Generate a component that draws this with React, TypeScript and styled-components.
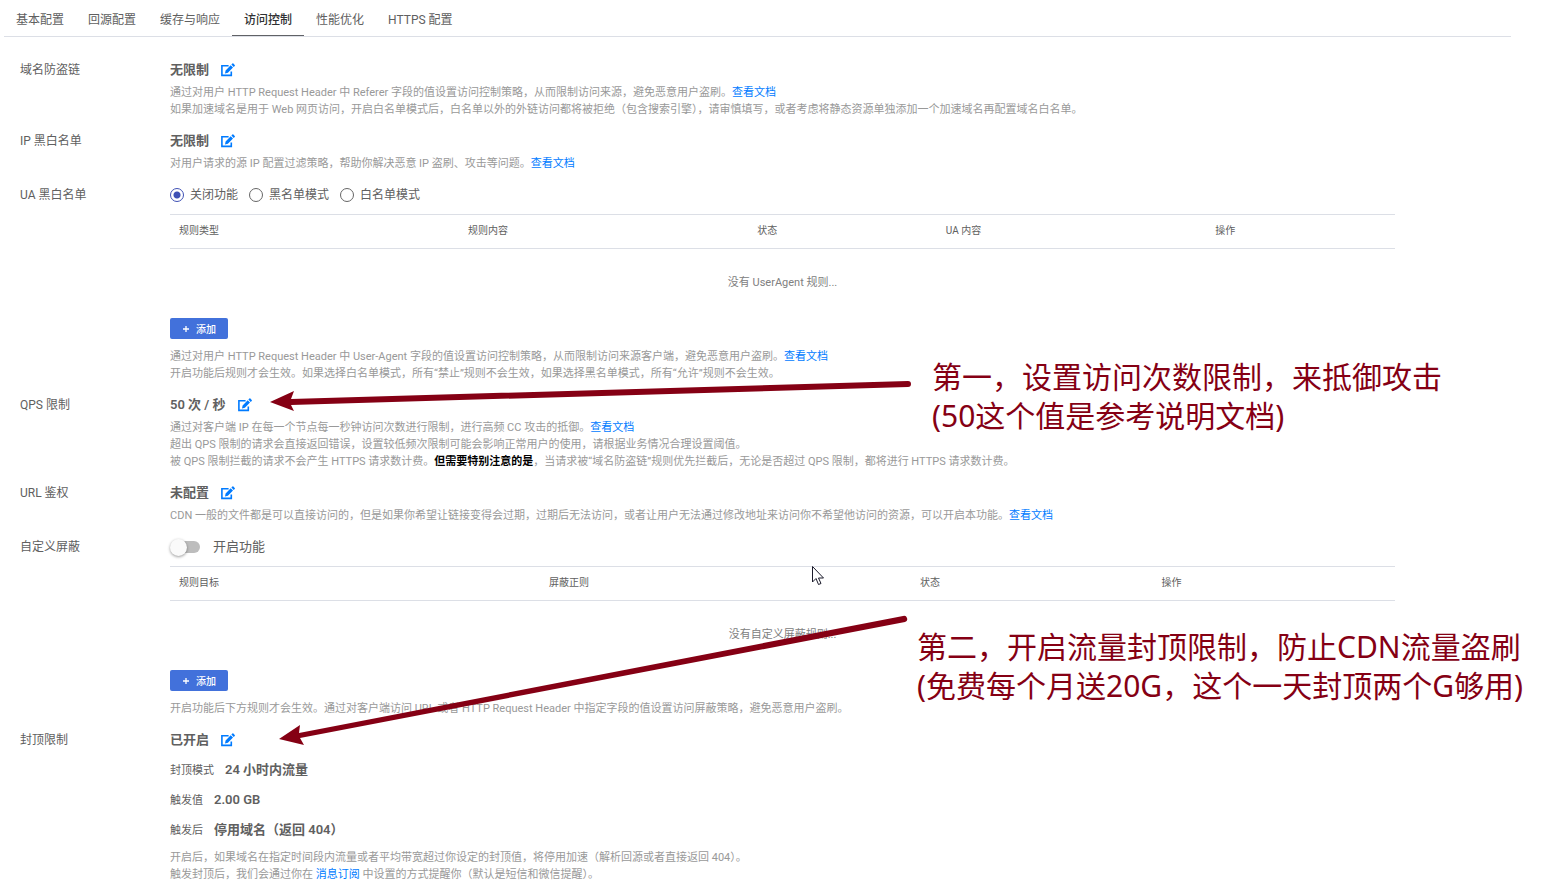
import React, { useState } from "react";
import styled, { createGlobalStyle } from "styled-components";

const GlobalStyle = createGlobalStyle`
  *, *::before, *::after { box-sizing: border-box; }
  html, body { margin: 0; overflow: hidden; background: #fff; }
  body {
    height: 100vh;
    color: #606060;
    font-family: Roboto, "Noto Sans CJK SC", sans-serif;
    font-size: 12px;
    line-height: 20px;
  }
`;

const Page = styled.main`
  position: relative;
  padding: 0 32px 16px 4px;
`;

const TabBar = styled.nav`
  display: flex;
  height: 37px;
  border-bottom: 1px solid #dcdfe6;
`;

const Tab = styled.a<{ $active?: boolean }>`
  height: 36px;
  padding: 0 12px;
  color: ${(p) => (p.$active ? "#303133" : "#606060")};
  font-weight: ${(p) => (p.$active ? 500 : 400)};
  line-height: 40px;
  text-decoration: none;
  white-space: nowrap;
  box-shadow: ${(p) => (p.$active ? "inset 0 -1px 0 #606266" : "none")};
`;

const Settings = styled.div`
  display: flex;
  flex-direction: column;
  gap: 13px;
  padding: 23px 116px 0 16px;
`;

const Row = styled.section`
  display: grid;
  grid-template-columns: 150px minmax(0, 1fr);
`;

const RowLabel = styled.h2`
  margin: 0;
  font-size: 12px;
  font-weight: 400;
  line-height: 20px;
`;

const ValueLine = styled.div`
  display: flex;
  align-items: center;
  gap: 12px;
  height: 20px;
  font-size: 13px;
  font-weight: 600;
`;

const EditButton = styled.button`
  display: flex;
  padding: 0;
  border: 0;
  background: none;
  color: #007bff;
  cursor: pointer;
`;

const Description = styled.div`
  margin-top: 4px;
  color: #999;
  font-size: 11px;
  line-height: 17px;

  p { margin: 0; }
  a { color: #007bff; text-decoration: none; }
  strong { color: #000; font-weight: 700; }
`;

const ControlLine = styled.div`
  display: flex;
  align-items: center;
  gap: 11px;
  height: 20px;
  margin-bottom: 9px;
`;

const RadioOption = styled.label`
  display: flex;
  align-items: center;
  gap: 6px;
`;

const Radio = styled.input`
  appearance: none;
  width: 14px;
  height: 14px;
  margin: 0;
  border: 1px solid #666;
  border-radius: 50%;

  &:checked {
    border-color: #3f51b5;
    background: radial-gradient(circle, #3f51b5 3px, transparent 4px);
  }
`;

const SwitchOption = styled.label`
  display: flex;
  align-items: center;
  gap: 13px;
  font-size: 13px;
`;

const Switch = styled.input`
  appearance: none;
  display: flex;
  align-items: center;
  width: 30px;
  height: 12px;
  margin: 0;
  border-radius: 6px;
  background: linear-gradient(to right, transparent 6px, #bdbdbd 6px);

  &::before {
    content: "";
    width: 17px;
    height: 17px;
    flex: none;
    border-radius: 50%;
    background: #fafafa;
    box-shadow: 0 1px 3px rgba(0, 0, 0, 0.4);
  }
  &:checked { justify-content: flex-end; background: #9fa8da; }
`;

const RuleTable = styled.table`
  width: 100%;
  table-layout: fixed;
  border-collapse: separate;
  border-spacing: 0;

  th {
    height: 35px;
    padding: 0 9px 2px;
    border-top: 1px solid #dcdfe6;
    border-bottom: 1px solid #dcdfe6;
    font-size: 10px;
    font-weight: 400;
    line-height: 16px;
    text-align: left;
  }
  td {
    height: 69px;
    padding: 0 0 2px;
    color: #808080;
    font-size: 11px;
    text-align: center;
  }
`;

const AddButton = styled.button`
  display: flex;
  align-items: center;
  justify-content: center;
  gap: 6px;
  width: 58px;
  height: 21px;
  margin-bottom: 9px;
  padding: 0;
  border: 0;
  border-radius: 2px;
  background: #4271db;
  color: #fff;
  font-family: inherit;
  font-size: 10px;
  font-weight: 500;
  cursor: pointer;

  & + ${Description} { margin-top: 0; }
`;

const Details = styled.dl`
  margin: 5px 0 0;
`;

const Detail = styled.div`
  display: flex;
  align-items: baseline;
  gap: 11px;
  height: 30px;
  line-height: 30px;

  dt { font-size: 11px; }
  dd { margin: 0; font-size: 13px; font-weight: 600; }
`;

const Overlay = styled.svg`
  position: absolute;
  top: 0;
  left: 0;
  pointer-events: none;
`;

const Note = styled.p<{ $x: number; $y: number }>`
  position: absolute;
  top: ${(p) => p.$y}px;
  left: ${(p) => p.$x}px;
  margin: 0;
  color: #850014;
  font-family: "Noto Sans", "Noto Sans CJK SC", sans-serif;
  font-size: 30px;
  line-height: 39px;
  white-space: nowrap;
`;

const EditIcon = () => (
  <svg width="14" height="14" viewBox="0 0 14 14" aria-hidden="true">
    <path d="M7.6 2.8H.9v9.6h9.4V8.4" fill="none" stroke="currentColor" strokeWidth="1.6" />
    <path d="M4 10.4l.6-3L9.7 2.3l2.3 2.3-5.1 5.1zM10.4 1.6l1-1a.7.7 0 0 1 1 0l1.3 1.3a.7.7 0 0 1 0 1l-1 1z" fill="currentColor" />
  </svg>
);

const PlusIcon = () => (
  <svg width="8" height="8" viewBox="0 0 8 8" aria-hidden="true">
    <path d="M4 1v6M1 4h6" stroke="currentColor" strokeWidth="1.3" />
  </svg>
);

function Value({ children }: { children: React.ReactNode }) {
  return (
    <ValueLine>
      <span>{children}</span>
      <EditButton type="button" aria-label="编辑">
        <EditIcon />
      </EditButton>
    </ValueLine>
  );
}

function Rules({ columns, empty }: { columns: [string, string][]; empty: string }) {
  return (
    <>
      <RuleTable>
        <colgroup>
          {columns.map(([name, width]) => (
            <col key={name} style={{ width }} />
          ))}
        </colgroup>
        <thead>
          <tr>
            {columns.map(([name]) => (
              <th key={name} scope="col">{name}</th>
            ))}
          </tr>
        </thead>
        <tbody>
          <tr>
            <td colSpan={columns.length}>{empty}</td>
          </tr>
        </tbody>
      </RuleTable>
      <AddButton type="button">
        <PlusIcon />
        添加
      </AddButton>
    </>
  );
}

const DocLink = () => <a href="#docs">查看文档</a>;

const tabs = ["基本配置", "回源配置", "缓存与响应", "访问控制", "性能优化", "HTTPS 配置"];
const uaModes = ["关闭功能", "黑名单模式", "白名单模式"];

export default function App() {
  const [mode, setMode] = useState(uaModes[0]);
  const [blocking, setBlocking] = useState(false);

  return (
    <Page>
      <GlobalStyle />
      <TabBar>
        {tabs.map((tab) => (
          <Tab key={tab} href="#tab" $active={tab === "访问控制"}>{tab}</Tab>
        ))}
      </TabBar>

      <Settings>
        <Row>
          <RowLabel>域名防盗链</RowLabel>
          <div>
            <Value>无限制</Value>
            <Description>
              <p>通过对用户 HTTP Request Header 中 Referer 字段的值设置访问控制策略，从而限制访问来源，避免恶意用户盗刷。<DocLink /></p>
              <p>如果加速域名是用于 Web 网页访问，开启白名单模式后，白名单以外的外链访问都将被拒绝（包含搜索引擎），请审慎填写，或者考虑将静态资源单独添加一个加速域名再配置域名白名单。</p>
            </Description>
          </div>
        </Row>

        <Row>
          <RowLabel>IP 黑白名单</RowLabel>
          <div>
            <Value>无限制</Value>
            <Description>
              <p>对用户请求的源 IP 配置过滤策略，帮助你解决恶意 IP 盗刷、攻击等问题。<DocLink /></p>
            </Description>
          </div>
        </Row>

        <Row>
          <RowLabel>UA 黑白名单</RowLabel>
          <div>
            <ControlLine role="radiogroup" aria-label="UA 黑白名单">
              {uaModes.map((name) => (
                <RadioOption key={name}>
                  <Radio type="radio" name="ua-mode" checked={mode === name} onChange={() => setMode(name)} />
                  {name}
                </RadioOption>
              ))}
            </ControlLine>
            <Rules
              columns={[["规则类型", "23.6%"], ["规则内容", "23.6%"], ["状态", "15.4%"], ["UA 内容", "22%"], ["操作", "15.4%"]]}
              empty="没有 UserAgent 规则..."
            />
            <Description>
              <p>通过对用户 HTTP Request Header 中 User-Agent 字段的值设置访问控制策略，从而限制访问来源客户端，避免恶意用户盗刷。<DocLink /></p>
              <p>开启功能后规则才会生效。如果选择白名单模式，所有“禁止”规则不会生效，如果选择黑名单模式，所有“允许”规则不会生效。</p>
            </Description>
          </div>
        </Row>

        <Row>
          <RowLabel>QPS 限制</RowLabel>
          <div>
            <Value>50 次 / 秒</Value>
            <Description>
              <p>通过对客户端 IP 在每一个节点每一秒钟访问次数进行限制，进行高频 CC 攻击的抵御。<DocLink /></p>
              <p>超出 QPS 限制的请求会直接返回错误，设置较低频次限制可能会影响正常用户的使用，请根据业务情况合理设置阈值。</p>
              <p>被 QPS 限制拦截的请求不会产生 HTTPS 请求数计费。<strong>但需要特别注意的是</strong>，当请求被“域名防盗链”规则优先拦截后，无论是否超过 QPS 限制，都将进行 HTTPS 请求数计费。</p>
            </Description>
          </div>
        </Row>

        <Row>
          <RowLabel>URL 鉴权</RowLabel>
          <div>
            <Value>未配置</Value>
            <Description>
              <p>CDN 一般的文件都是可以直接访问的，但是如果你希望让链接变得会过期，过期后无法访问，或者让用户无法通过修改地址来访问你不希望他访问的资源，可以开启本功能。<DocLink /></p>
            </Description>
          </div>
        </Row>

        <Row>
          <RowLabel>自定义屏蔽</RowLabel>
          <div>
            <ControlLine>
              <SwitchOption>
                <Switch type="checkbox" role="switch" checked={blocking} onChange={() => setBlocking(!blocking)} />
                开启功能
              </SwitchOption>
            </ControlLine>
            <Rules
              columns={[["规则目标", "30.2%"], ["屏蔽正则", "30.3%"], ["状态", "19.7%"], ["操作", "19.8%"]]}
              empty="没有自定义屏蔽规则..."
            />
            <Description>
              <p>开启功能后下方规则才会生效。通过对客户端访问 URL 或者 HTTP Request Header 中指定字段的值设置访问屏蔽策略，避免恶意用户盗刷。</p>
            </Description>
          </div>
        </Row>

        <Row>
          <RowLabel>封顶限制</RowLabel>
          <div>
            <Value>已开启</Value>
            <Details>
              <Detail><dt>封顶模式</dt><dd>24 小时内流量</dd></Detail>
              <Detail><dt>触发值</dt><dd>2.00 GB</dd></Detail>
              <Detail><dt>触发后</dt><dd>停用域名（返回 404）</dd></Detail>
            </Details>
            <Description>
              <p>开启后，如果域名在指定时间段内流量或者平均带宽超过你设定的封顶值，将停用加速（解析回源或者直接返回 404）。</p>
              <p>触发封顶后，我们会通过你在 <a href="#messages">消息订阅</a> 中设置的方式提醒你（默认是短信和微信提醒）。</p>
            </Description>
          </div>
        </Row>
      </Settings>

      <Overlay width="1000" height="800" viewBox="0 0 1000 800" aria-hidden="true">
        <g fill="#850014" stroke="none">
          <path d="M270 402L294 391L291 399L908 381A3 3 0 0 1 908 387L291 405L294 411Z" />
          <path d="M279 739L300 725L299 733L903 616A3 3 0 0 1 905 622L300 738L304 745Z" />
        </g>
        <path d="M812.5 566.5v15.500l3.500-3.500 2.500 6 2.500-1-2.500-5.500h5z" fill="#fff" stroke="#1b1b2b" strokeWidth="1" />
      </Overlay>
      <Note $x={932} $y={357}>第一，设置访问次数限制，来抵御攻击<br />(50这个值是参考说明文档)</Note>
      <Note $x={917} $y={627}>第二，开启流量封顶限制，防止CDN流量盗刷<br />(免费每个月送20G，这个一天封顶两个G够用)</Note>
    </Page>
  );
}
